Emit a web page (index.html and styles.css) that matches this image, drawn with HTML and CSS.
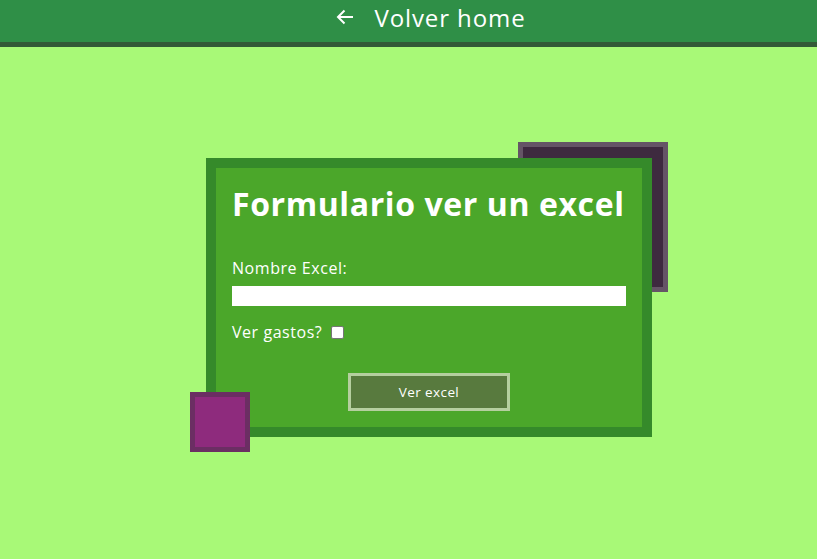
FILE: index.html
```html
<!DOCTYPE html>
<html lang="es">
<head>
<meta charset="utf-8">
<link rel="stylesheet" href="styles.css">
</head>
<body>
<header class="topbar">
  <a class="home-link" href="#">
    <svg class="arrow" width="20" height="20" viewBox="0 0 20 20"><path d="M18 10H3M9.5 3.5L3 10L9.5 16.5" fill="none" stroke="#ffffff" stroke-width="2"/></svg>
    <span>Volver home</span>
  </a>
</header>
<main class="stage">
  <div class="card-wrap">
    <div class="deco deco-dark"></div>
    <form class="card">
      <h1 class="title">Formulario ver un excel</h1>
      <label class="label" for="nombre">Nombre Excel:</label>
      <input class="text-input" id="nombre" type="text">
      <div class="check-row">
        <label class="label" for="gastos">Ver gastos?</label>
        <span class="checkbox"></span>
      </div>
      <div class="actions">
        <button class="btn" type="button">Ver excel</button>
      </div>
    </form>
    <div class="deco deco-purple"></div>
  </div>
</main>
</body>
</html>
```
FILE: styles.css
```css
* { box-sizing: border-box; }
html, body { margin: 0; padding: 0; }
body {
  background: #a8f977;
  font-family: "Open Sans", "Liberation Sans", sans-serif;
  color: #ffffff;
  height: 559px;
  overflow: hidden;
}
.topbar {
  height: 47px;
  background: #2f8f47;
  border-bottom: 5px solid #335a37;
  display: flex;
  justify-content: center;
  align-items: center;
}
.home-link {
  display: flex;
  align-items: center;
  gap: 19px;
  color: #ffffff;
  text-decoration: none;
  font-size: 24px;
  letter-spacing: 0.9px;
  margin-left: 44px;
  margin-top: -8px;
}
.arrow { display: block; }
.stage {
  padding-top: 111px;
  padding-left: 206px;
}
.card-wrap {
  position: relative;
  width: 446px;
}
.deco { position: absolute; }
.deco-dark {
  left: 312px;
  top: -16px;
  width: 150px;
  height: 150px;
  background: #3e2a3f;
  border: 5px solid #655566;
}
.deco-purple {
  left: -16px;
  top: 234px;
  width: 60px;
  height: 60px;
  background: #8e2b7d;
  border: 5px solid #6b2e63;
}
.card {
  position: relative;
  width: 446px;
  height: 279px;
  background: #4ba72a;
  border: 10px solid #358a2a;
  padding: 14px 16px 0 16px;
  display: flex;
  flex-direction: column;
}
.title {
  margin: 0;
  font-size: 32px;
  font-weight: 700;
  line-height: 44px;
  letter-spacing: 0.6px;
  white-space: nowrap;
}
.label {
  font-size: 16px;
  line-height: 20px;
  letter-spacing: 0.55px;
}
.card > .label { margin-top: 32px; }
.text-input {
  margin-top: 8px;
  height: 20px;
  border: none;
  background: #ffffff;
  width: 394px;
}
.check-row {
  margin-top: 16px;
  display: flex;
  align-items: center;
  gap: 9px;
}
.checkbox {
  width: 13px;
  height: 13px;
  background: #ffffff;
  border: 1px solid #767676;
  border-radius: 2px;
}
.actions {
  margin-top: 31px;
  display: flex;
  justify-content: center;
}
.btn {
  width: 162px;
  height: 38px;
  background: #587a3e;
  border: 3px solid #b5cf9f;
  color: #ffffff;
  font-family: inherit;
  font-size: 13.5px;
  letter-spacing: 0.4px;
}
```
